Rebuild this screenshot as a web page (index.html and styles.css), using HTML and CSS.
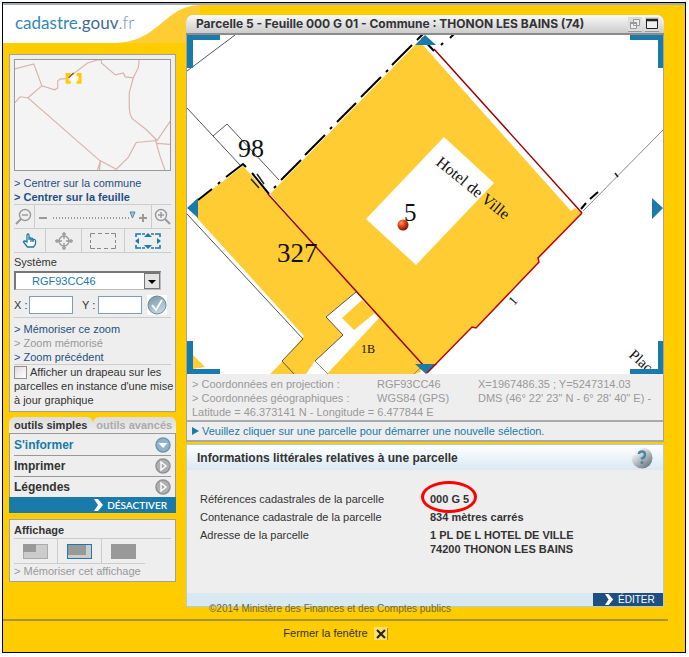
FILE: index.html
```html
<!DOCTYPE html>
<html lang="fr">
<head>
<meta charset="utf-8">
<title>cadastre.gouv.fr</title>
<link rel="stylesheet" href="styles.css">
</head>
<body>
<div class="window">
  <svg class="swoosh" width="197" height="38" viewBox="3 5 197 38" aria-hidden="true">
    <rect x="100" y="5" width="100" height="38" fill="#fc3"/>
    <path d="M3 5H200C163 6 160 43 113 43H3Z" fill="#fff"/>
  </svg>
  <div class="columns">
    <aside class="sidebar">
      <div class="brand">cadastre<i>.gouv</i><b>.fr</b></div>

      <section class="panel">
        <svg class="minimap" viewBox="15 60 156 111" fill="none" stroke="#d8b4ac" stroke-width="1.2">
          <path d="M15 69L34 64L42 86L55 90L58 88V81L61 79H67L88 63L98 60H103M102 60V63L116 75L124 73L126 77L134 78L139 68L140 60M134 78L130 93V108L131 115L133 119L147 130L158 141L171 122M158 141L137 143L129 158L117 170L100 161L28 98L20 97L15 103M28 98L42 86M101 161L98 171M101 161L100 171M156 139L161 157L166 171M158 144L171 145"/>
          <path d="M70 82V77H77V82" stroke="none" fill="#fff"/>
          <path d="M71 74.500H67.500V82.500H71M77 74.500H80.500V82.500H77" stroke="#fc0" stroke-width="3"/>
          <path d="M69 78L74 73" stroke="#804010"/>
        </svg>
        <a class="link" href="#">&gt; Centrer sur la commune</a>
        <a class="link strong" href="#">&gt; Centrer sur la feuille</a>

        <div class="zoombar">
          <button aria-label="Zoom arrière"><svg width="18" height="18" viewBox="0 0 18 18" fill="none" stroke="#999" stroke-width="1.4"><circle cx="10" cy="7" r="5.5"/><path d="M7 7h6"/><path d="M6 11l-5 5" stroke-width="2"/></svg></button>
          <div class="scale"><svg width="112" height="18" viewBox="0 0 112 18" fill="none" stroke="#999"><path d="M2 10h8M102 10h8M106 6v8" stroke-width="2"/><path d="M16 10h78" stroke-width="2" stroke-dasharray="1 2"/><path d="M93 4h5l-2.500 6z" fill="#9cc" stroke="#58a"/></svg></div>
          <button aria-label="Zoom avant"><svg width="18" height="18" viewBox="0 0 18 18" fill="none" stroke="#999" stroke-width="1.400"><circle cx="8" cy="7" r="5.500"/><path d="M5 7h6M8 4v6"/><path d="M12 11l5 5" stroke-width="2"/></svg></button>
        </div>

        <div class="tools">
          <button aria-label="Sélection"><svg width="16" height="16" viewBox="0 0 16 16" fill="#fff" stroke="#1a7aaa" stroke-width="1.300"><path d="M5 9V2.500Q5 1 6 1T7 2.500V7 5.500Q8 4 9 5.500V7 5.500Q10 4.500 11 6V7Q13 5.500 13.500 8V11L11.500 14H5.500L1.500 9Q2 7 5 9Z"/><path d="M9 6v3M11 6v3"/></svg></button>
          <button aria-label="Recentrer"><svg width="18" height="18" viewBox="0 0 18 18" fill="none" stroke="#999" stroke-width="1.300"><circle cx="9" cy="9" r="5"/><path d="M9 0v7M9 11v7M0 9h7M11 9h7M7 2h4M7 16h4M2 7v4M16 7v4"/></svg></button>
          <button aria-label="Zone"><svg width="26" height="16" viewBox="0 0 26 16" fill="none" stroke="#888"><path d="M.5 4.500V.5H5M8 .5h4M15 .5h4M21 .5H25.500V4.500M25.500 7v3M25.500 12V15.500H21M18 15.500h-4M11 15.500H7M5 15.500H.5V12M.5 10V7"/></svg></button>
          <button aria-label="Étendue"><svg width="26" height="16" viewBox="0 0 26 16" fill="none" stroke="#1a7aaa"><path d="M1 4V1H6M20 1H25V4M25 12V15H20M6 15H1V12M7 1h3M16 1h3M7 15h3M16 15h3" stroke-width="1.600"/><path d="M13 0l4 4H9zM13 16l4-4H9zM0 8l4-3v6zM26 8l-4-3v6z" fill="#1a7aaa" stroke="none"/></svg></button>
        </div>

        <label class="caption" for="systeme">Système</label>
        <div class="picker">
          <select id="systeme"><option>RGF93CC46</option></select>
          <span class="drop" aria-hidden="true"></span>
        </div>
        <div class="coords">
          <label for="cx">X :</label><input id="cx" type="text">
          <label class="second" for="cy">Y :</label><input id="cy" type="text">
          <button aria-label="Valider"><svg width="20" height="20" viewBox="0 0 20 20"><defs><linearGradient id="ok" x2="0.500" y2="1"><stop stop-color="#6f92a5"/><stop offset="1" stop-color="#c4d6df"/></linearGradient></defs><rect width="20" height="20" fill="#fff"/><circle cx="10" cy="10" r="9" fill="url(#ok)" stroke="#6b8796"/><path d="M5 10l4 5 6-10" fill="none" stroke="#fff" stroke-width="1.800"/></svg></button>
        </div>

        <div class="links">
          <a class="link" href="#">&gt; Mémoriser ce zoom</a>
          <a class="link off" href="#">&gt; Zoom mémorisé</a>
          <a class="link" href="#">&gt; Zoom précédent</a>
        </div>
        <label class="flag"><input type="checkbox">Afficher un drapeau sur les parcelles en instance d'une mise à jour graphique</label>
      </section>

      <section class="toolbox">
        <div class="tabs"><button class="on">outils simples</button><button>outils avancés</button></div>
        <div class="accordion">
          <button class="open">S'informer<svg width="16" height="16" viewBox="0 0 16 16"><circle cx="8" cy="8" r="7" fill="#8fb3c8" stroke="#6f98ae" stroke-width="1.500"/><path d="M3.500 6h9L8 11z" fill="#fff"/></svg></button>
          <button>Imprimer<svg width="16" height="16" viewBox="0 0 16 16"><circle cx="8" cy="8" r="7" fill="#b0b0b0" stroke="#929292" stroke-width="1.500"/><path d="M6 4l5 4-5 4z" fill="#aaa" stroke="#fff" stroke-width="1.400"/></svg></button>
          <button>Légendes<svg width="16" height="16" viewBox="0 0 16 16"><circle cx="8" cy="8" r="7" fill="#b0b0b0" stroke="#929292" stroke-width="1.500"/><path d="M6 4l5 4-5 4z" fill="#aaa" stroke="#fff" stroke-width="1.400"/></svg></button>
        </div>
        <button class="disable"><svg width="10" height="12" viewBox="0 0 10 12"><path d="M0 0H4L9 6L4 12H0L4 6Z" fill="#fff"/></svg>DÉSACTIVER</button>
      </section>

      <section class="panel display">
        <h2>Affichage</h2>
        <div class="views">
          <button aria-label="Petite vue"><svg width="25" height="15"><rect x=".5" y=".5" width="24" height="14" fill="#ccc" stroke="#aaa"/><rect width="13" height="8" fill="#999"/></svg></button>
          <button aria-label="Vue moyenne"><svg width="25" height="15"><rect width="25" height="15" fill="#1a7aaa"/><rect x="1" y="1" width="23" height="13" fill="#ccc"/><rect x="1" y="1" width="18" height="10" fill="#999"/></svg></button>
          <button aria-label="Grande vue"><svg width="25" height="15"><rect width="25" height="15" fill="#999"/></svg></button>
        </div>
        <a class="link off" href="#">&gt; Mémoriser cet affichage</a>
      </section>
    </aside>

    <main class="main">
      <section class="viewer">
        <header class="titlebar">
          <h1>Parcelle 5 - Feuille 000 G 01 - Commune : THONON LES BAINS (74)</h1>
          <button aria-label="Réduire"><svg width="14" height="14" viewBox="0 0 14 14" fill="#eee" stroke="#999"><path d="M5.500 2.500h6v6h-6zM2.500 5.500h6v6h-6z"/><path d="M2 6h7" stroke-width="2"/></svg></button>
          <button aria-label="Agrandir"><svg width="14" height="14" viewBox="0 0 14 14" fill="#eee" stroke="#222"><path d="M1.500 2.500h11v9h-11z"/><path d="M1 3h12" stroke-width="2.500"/></svg></button>
        </header>
        <svg class="map" viewBox="187 35 476 339" fill="none">
          <defs><radialGradient id="ball" cx=".35" cy=".3" r=".75"><stop stop-color="#ff9a70"/><stop offset=".4" stop-color="#e84818"/><stop offset="1" stop-color="#701000"/></radialGradient></defs>
          <g fill="#fc3">
            <path d="M243 166L268 194L427 370L415 374H270L281 363L304 336L197 218V201Z"/>
            <path d="M270 194L416 44H422L571 211L575 208L582 213L538 259L539 262L476 328L472 327L427 372Z"/>
            <path d="M193 355L205 367L193 369Z"/>
          </g>
          <g fill="#fff">
            <path d="M356 292L326 317L343 335L315 361L306 374H327L379 318Z"/>
            <path d="M444 137L494 183L416 265L366 219Z"/>
            <path d="M420 374L422 366L430 374Z"/>
          </g>
          <path d="M342 318L362 300L375 313L354 330Z" fill="#fc3"/>
          <g stroke="#555">
            <path d="M187 71L235 35M187 108L240 165M213 136L227 124L279 180M187 214L303 339L282 361L294 374M356 292L326 317L343 335L315 361"/>
            <path d="M315 361L328 374M583 211L663 130M414 374L420 368" stroke="#888"/>
            <path d="M251 179L259 188M257 174L264 184M615 173L618 177" stroke="#222" stroke-width="1.500"/>
          </g>
          <path d="M423 34L417 40M412 45L392 65M388 70L386 72M381 77L361 97M356 103L337 122M332 127L330 129M325 135L305 155M301 160L281 180M276 186L274 188M246 167L243 164L226 177M220 182L218 184M212 189L198 200M252 173L269 194M434 51L422 38M443 43L441 45M454 34L450 38M581 209L586 203M590 199L598 192" stroke="#000" stroke-width="2"/>
          <path d="M268 194L424 366" stroke="#900" stroke-width="1.500"/>
          <path d="M434 49L582 213" stroke="#900" stroke-width="1.500"/>
          <g fill="#1a7aaa">
            <path d="M187 35H220V40H193V68H187ZM663 35H630V40H658V68H663ZM187 374H220V369H193V341H187Z"/>
            <path d="M415 45L425 35L436 45ZM415 364H437L426 374ZM187 208L198 198V218ZM663 208L652 198V219Z"/>
          </g>
          <path d="M582 213L538 258L539 262L476 328L472 327L427 373" stroke="#c00000" stroke-width="1.500"/>
          <g class="labels" fill="#111">
            <text x="238" y="157" font-size="26">98</text>
            <text x="277" y="262" font-size="27">327</text>
            <text x="404" y="221" font-size="25">5</text>
            <text x="361" y="353" font-size="12">1B</text>
            <text font-size="16" transform="translate(435 164) rotate(39)">Hotel de Ville</text>
            <text font-size="13" transform="translate(514 306) rotate(-48)">1</text>
            <text font-size="15" transform="translate(628 356) rotate(42)">Plac</text>
          </g>
          <path d="M658 341h5v33h-33v-5h28z" fill="#1a7aaa"/>
          <circle cx="403" cy="225" r="5.500" fill="url(#ball)"/>
        </svg>
        <div class="position">
          <span>&gt; Coordonnées en projection :</span><span>RGF93CC46</span><span>X=1967486.35 ; Y=5247314.03</span>
          <span>&gt; Coordonnées géographiques :</span><span>WGS84 (GPS)</span><span>DMS (46° 22' 23" N - 6° 28' 40" E) -</span>
          <span class="full">Latitude = 46.373141 N - Longitude = 6.477844 E</span>
        </div>
        <p class="hint"><svg width="7" height="8" viewBox="0 0 7 8"><path d="M0 0L7 4L0 8Z" fill="#1a7aaa"/></svg>Veuillez cliquer sur une parcelle pour démarrer une nouvelle sélection.</p>
      </section>

      <section class="info">
        <header><h2>Informations littérales relatives à une parcelle</h2>
          <button aria-label="Aide"><svg width="22" height="22" viewBox="0 0 22 22"><defs><linearGradient id="help" x2=".8" y2="1"><stop offset=".2" stop-color="#f8fbfd"/><stop offset="1" stop-color="#667078"/></linearGradient></defs><circle cx="11" cy="11" r="10.500" fill="url(#help)"/><path d="M8 7Q8 4.500 11 4.500T14 7.500T11 11.500V12.500" fill="none" stroke="#4a87a5" stroke-width="2.500"/><circle cx="11" cy="15.500" r="1.500" fill="#4a87a5"/></svg></button>
        </header>
        <table>
          <tr><th scope="row">Références cadastrales de la parcelle</th><td><span class="ringed">000 G 5</span></td></tr>
          <tr><th scope="row">Contenance cadastrale de la parcelle</th><td>834 mètres carrés</td></tr>
          <tr><th scope="row">Adresse de la parcelle</th><td>1 PL DE L HOTEL DE VILLE<br>74200 THONON LES BAINS</td></tr>
        </table>
        <div class="actions"><button><svg width="9" height="11" viewBox="0 0 10 12"><path d="M0 0H4L9 6L4 12H0L4 6Z" fill="#fff"/></svg>ÉDITER</button></div>
      </section>
      <p class="copyright">©2014 Ministère des Finances et des Comptes publics</p>
    </main>
  </div>
  <footer class="close">
    <button>Fermer la fenêtre<svg width="14" height="13" viewBox="0 0 14 13"><rect width="14" height="13" fill="#ffdf70"/><path d="M3 3l8 8M11 3l-8 8" stroke="#222" stroke-width="2"/><path d="M13.500 1v12" stroke="#a80"/></svg></button>
  </footer>
</div>
</body>
</html>
```
FILE: styles.css
```css
* { box-sizing: border-box; }
body {
  margin: 2px 3px 4px 2px;
  background: #fff;
  color: #333;
  font: 11px/14px "Liberation Sans", Arial, sans-serif;
}
h1, h2, p { margin: 0; }
button {
  margin: 0;
  padding: 0;
  border: 0;
  background: none;
  color: inherit;
  font: inherit;
}
svg { display: block; flex: none; }
a { text-decoration: none; }

.window {
  position: relative;
  border: 1px solid #000;
  background: #fc0;
  box-shadow: inset 0 2px #a3acb5;
  padding-top: 2px;
}
.swoosh { position: absolute; left: 0; top: 2px; }
.columns {
  position: relative;
  display: grid;
  grid-template-columns: 167px minmax(0, 1fr);
  gap: 10px;
  padding: 0 21px 0 6px;
}

/* Sidebar */
.brand {
  height: 49px;
  padding: 6px 0 0 6px;
  color: #3389b0;
  font: 17px/24px Lato, sans-serif;
}
.brand i { font-style: normal; color: #41699a; }
.brand b { font-weight: 300; color: #6c8fb5; }
.panel {
  border: 1px solid #a0a0a0;
  background: #eee;
  padding: 4px;
}
.minimap {
  width: 100%;
  margin-bottom: 5px;
  border: 1px solid #999;
  background: #f4f4f4;
}
.link { display: block; color: #1f4f82; }
.strong { font-weight: bold; }
.off { color: #999; }

.zoombar, .tools {
  display: flex;
  height: 24px;
  border-top: 1px solid #ccc;
}
.zoombar > *, .tools > *, .views > * {
  display: flex;
  align-items: center;
  justify-content: center;
}
.zoombar > * + *, .tools > * + *, .views > * + * { border-left: 1px solid #ccc; }
.zoombar button { width: 20px; }
.scale { flex: 1; }
.tools { height: 25px; border-bottom: 1px solid #ccc; }
.tools button { width: 31px; }
.tools button:nth-child(2) { width: 36px; }
.tools button:nth-child(3) { width: 43px; }
.tools button:nth-child(4) { flex: 1; }

.caption { display: block; padding: 2px 0; }
.picker { position: relative; width: 147px; }
.picker select {
  display: block;
  width: 100%;
  height: 19px;
  padding: 0 0 0 16px;
  border: 1px solid #bbb;
  border-top: 2px solid #777;
  border-left: 2px solid #777;
  border-radius: 0;
  background: #fff;
  appearance: none;
  color: #1a7aaa;
  font: inherit;
}
.drop {
  position: absolute;
  top: 2px;
  right: 1px;
  width: 16px;
  height: 16px;
  border: 1px solid #777;
  background: #e4e4e4;
  pointer-events: none;
}
.drop::after {
  content: "";
  position: absolute;
  left: 3px;
  top: 6px;
  border: 4px solid transparent;
  border-top-color: #000;
  border-bottom: 0;
}
.coords {
  display: flex;
  align-items: center;
  padding: 5px 0 2px;
}
.coords label { width: 15px; white-space: nowrap; }
.coords .second { margin-left: 9px; width: 16px; }
.coords input {
  width: 44px;
  height: 18px;
  border: 1px solid #7f9db9;
  background: #fff;
}
.coords button { margin-left: 5px; }
.links {
  border: solid #ccc;
  border-width: 1px 0;
  padding: 4px 0 0;
}
.flag { display: block; margin: 0 -4px 0 0; }
.flag input {
  float: left;
  width: 13px;
  height: 13px;
  margin: 1px 3px 0 0;
  border: 1px solid #8e8f8f;
  background: linear-gradient(135deg, #ddd, #fff);
  appearance: none;
}

.toolbox { margin: 5px 0 6px; }
.tabs { display: flex; }
.tabs button {
  flex: 1;
  height: 17px;
  border-bottom: 1px solid #999;
  border-radius: 6px 6px 0 0;
  background: linear-gradient(#ddd, #eee);
  color: #aaa;
  font-weight: bold;
  white-space: nowrap;
}
.tabs .on { color: #333; }
.accordion {
  border: solid #999;
  border-width: 0 1px;
  background: #eee;
  padding: 0 4px;
}
.accordion button {
  display: flex;
  align-items: center;
  justify-content: space-between;
  width: 100%;
  height: 21px;
  font-size: 12px;
  font-weight: bold;
}
.accordion button + button { border-top: 1px solid #999; }
.accordion .open { color: #1a7aaa; }
.disable {
  display: flex;
  align-items: center;
  justify-content: flex-end;
  gap: 3px;
  width: 100%;
  height: 16px;
  padding-right: 9px;
  background: #1a7aaa;
  color: #fff;
  font: 600 10px/16px Lato, sans-serif;
}
.display { padding: 3px 4px; }
.display h2 { border-bottom: 1px solid #ccc; font-size: 11px; line-height: 15px; }
.views {
  display: flex;
  height: 25px;
  width: 131px;
  border-bottom: 1px solid #ccc;
}
.views button { flex: 1; }

/* Map viewer */
.main { padding-top: 10px; }
.viewer {
  border: 1px solid #a0a4a8;
  border-top: 0;
  border-bottom: 2px solid #aaa;
  border-radius: 7px 7px 0 0;
  background: #eee;
}
.titlebar {
  display: flex;
  align-items: center;
  gap: 3px;
  height: 20px;
  margin: 0 -1px;
  padding: 0 5px 0 10px;
  border-bottom: 2px solid #8c8c8c;
  border-radius: 7px 7px 0 0;
  background: linear-gradient(#fafafa, #ccc);
}
.titlebar h1 {
  flex: 1;
  font: bold 12px/16px Inter, sans-serif;
  white-space: nowrap;
}
.titlebar button { background: #ddd; border-bottom: 1px solid #999; }
.map { width: 100%; background: #fff; }
.labels { font-family: "Liberation Serif", "Times New Roman", serif; }
.position {
  display: grid;
  grid-template-columns: 185px 101px 1fr;
  padding: 3px 0 1px 5px;
  border-bottom: 2px solid #aaa;
  color: #999;
}
.full { grid-column: 1 / -1; }
.hint {
  display: flex;
  align-items: center;
  gap: 3px;
  padding: 2px 5px;
  color: #1a7aaa;
}

/* Parcel details */
.info {
  margin-top: 2px;
  border: 1px solid #a9cfe0;
  background: #eee;
}
.info header {
  display: flex;
  align-items: center;
  justify-content: space-between;
  height: 25px;
  padding: 0 10px;
  background: linear-gradient(#fff, #d9e9f1);
}
.info h2 { font-size: 12px; }
.info table { margin: 20px 13px 35px; border-spacing: 0; }
.info th, .info td { padding: 2px 0; vertical-align: top; text-align: left; }
.info th { width: 230px; font-weight: normal; }
.info td { font-weight: bold; }
.ringed { position: relative; }
.ringed::after {
  content: "";
  position: absolute;
  inset: -12px -8px -8px -9px;
  border: 3px solid #f00;
  border-radius: 50%;
}
.actions {
  display: flex;
  justify-content: flex-end;
  background: #d9e9f1;
}
.actions button {
  display: flex;
  align-items: center;
  gap: 4px;
  width: 70px;
  height: 13px;
  padding-left: 12px;
  background: #1f4f82;
  color: #fff;
  font-size: 10px;
  line-height: 13px;
}
.copyright {
  position: relative;
  margin: -5px 0 3px 23px;
  color: #6b6748;
  font-size: 10px;
}
.close {
  display: flex;
  justify-content: center;
  margin-right: 17px;
  padding: 5px 0 12px;
  border-top: 2px solid #a89535;
}
.close button { display: flex; align-items: center; gap: 6px; }
```
